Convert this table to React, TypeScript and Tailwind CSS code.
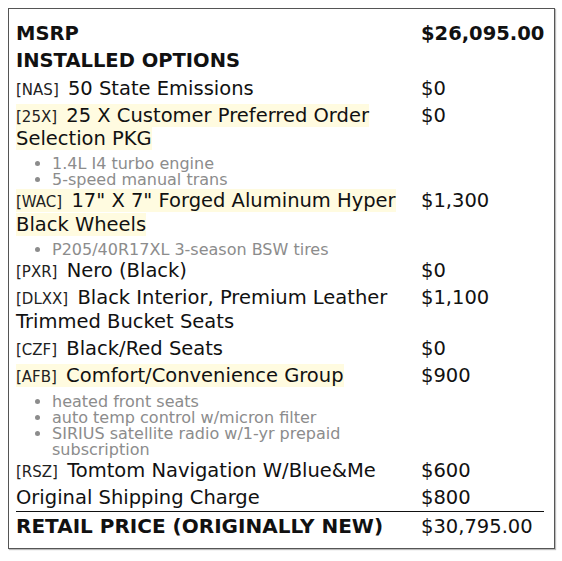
import React from "react";

type Opt = {
  code?: string;
  desc: string;
  price: string;
  hl?: boolean;
  bullets?: string[];
};

const options: Opt[] = [
  { code: "NAS", desc: "50 State Emissions", price: "$0" },
  {
    code: "25X",
    desc: "25 X Customer Preferred Order Selection PKG",
    price: "$0",
    hl: true,
    bullets: ["1.4L I4 turbo engine", "5-speed manual trans"],
  },
  {
    code: "WAC",
    desc: '17" X 7" Forged Aluminum Hyper Black Wheels',
    price: "$1,300",
    hl: true,
    bullets: ["P205/40R17XL 3-season BSW tires"],
  },
  { code: "PXR", desc: "Nero (Black)", price: "$0" },
  { code: "DLXX", desc: "Black Interior, Premium Leather Trimmed Bucket Seats", price: "$1,100" },
  { code: "CZF", desc: "Black/Red Seats", price: "$0" },
  {
    code: "AFB",
    desc: "Comfort/Convenience Group",
    price: "$900",
    hl: true,
    bullets: [
      "heated front seats",
      "auto temp control w/micron filter",
      "SIRIUS satellite radio w/1-yr prepaid subscription",
    ],
  },
  { code: "RSZ", desc: "Tomtom Navigation W/Blue&Me", price: "$600" },
  { desc: "Original Shipping Charge", price: "$800" },
];

export default function App() {
  return (
    <div
      className="bg-white w-[562px] h-[561px] pt-2 pl-2"
      style={{ fontFamily: "'DejaVu Sans', Verdana, sans-serif" }}
    >
      <div className="w-[547px] h-[541px] border border-[#555] shadow-[1px_1px_1px_#bbb] pl-[7px] pr-[10px] pt-[11px] text-[19.5px] leading-[23.3px] text-[#111]">
        <div className="grid grid-cols-[405px_123px]">
          <div className="py-[2px] font-bold">MSRP</div>
          <div className="py-[2px] font-bold">$26,095.00</div>
          <div className="py-[2px] font-bold col-span-2">INSTALLED OPTIONS</div>
          {options.map((o, i) => (
            <React.Fragment key={i}>
              <div className="py-[2px]">
                <span className={o.hl ? "bg-[#fffbe0]" : ""}>
                  {o.code && (
                    <span className="text-[15px] leading-none text-[#222] mr-[3px]">[{o.code}]</span>
                  )}
                  {o.code && " "}
                  {o.desc}
                </span>
                {o.bullets && (
                  <ul className="list-disc pl-9 mt-[6px] mb-[-3px] text-[16px] leading-[16px] text-[#8c8c8c]">
                    {o.bullets.map((b, j) => (
                      <li key={j}>{b}</li>
                    ))}
                  </ul>
                )}
              </div>
              <div className="py-[2px]">{o.price}</div>
            </React.Fragment>
          ))}
          <div className="pt-[3px] pb-[2px] border-t border-[#111] font-bold text-[20px]">
            RETAIL PRICE (ORIGINALLY NEW)
          </div>
          <div className="pt-[3px] pb-[2px] border-t border-[#111]">$30,795.00</div>
        </div>
      </div>
    </div>
  );
}
